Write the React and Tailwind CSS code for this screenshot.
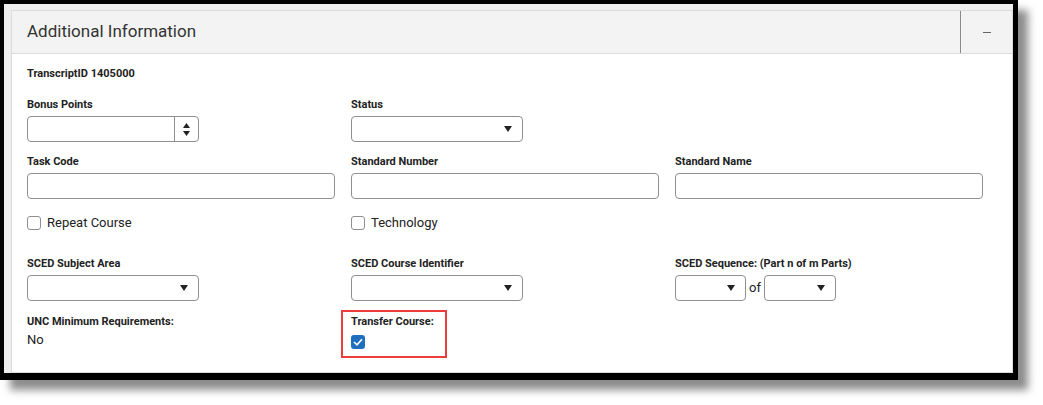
import React from 'react';

const font = { fontFamily: 'Roboto, "Liberation Sans", sans-serif' };

function Label({ children }) {
  return <div className="pt-[1px] text-[11px] font-bold leading-[14px] text-[#222] mb-[4px]">{children}</div>;
}

function TextBox({ className = '' }) {
  return <div className={`h-[26px] border border-[#8f8f8f] rounded-[4px] bg-white ${className}`} />;
}

function Caret() {
  return (
    <svg width="8" height="6" viewBox="0 0 8 6" className="block">
      <path d="M0 0 L8 0 L4 6 Z" fill="#222" />
    </svg>
  );
}

function Select({ className = '' }) {
  return (
    <div className={`h-[26px] border border-[#8f8f8f] rounded-[4px] bg-white flex items-center justify-end pr-[10px] ${className}`}>
      <Caret />
    </div>
  );
}

function Check({ label }) {
  return (
    <div className="flex items-center h-[16px]">
      <div className="w-[14px] h-[14px] border border-[#8f8f8f] rounded-[3px] bg-white" />
      <span className="ml-[6px] text-[13px] text-[#222]">{label}</span>
    </div>
  );
}

export default function App() {
  return (
    <div className="w-[1043px] h-[405px] bg-white" style={font}>
      <div className="w-[1018px] h-[380px] bg-black pt-[4px] pl-[4px] shadow-[10px_10px_8px_rgba(0,0,0,0.45)]">
        <div className="w-[1009px] h-[369px] bg-[#eeeeee] pt-[6px] pl-[7px]">
          <div className="w-[1002px] h-[363px] border border-[#dcdcdc] bg-white">
            {/* header */}
            <div className="h-[43px] bg-[#f3f3f3] border-b border-[#dcdcdc] flex items-center justify-between">
              <div className="pl-[15px] text-[17px] text-[#333] font-normal">Additional Information</div>
              <div className="h-full w-[52px] border-l border-[#8a8a8a] flex items-center justify-center">
                <div className="w-[8px] h-[1px] bg-[#666]" />
              </div>
            </div>

            {/* body */}
            <div className="pl-[15px] pt-[12px]">
              <div className="pt-[1px] text-[11px] font-bold leading-[14px] text-[#222]">TranscriptID 1405000</div>

              <div className="grid grid-cols-[308px_308px_308px] gap-x-[16px] mt-[16px]">
                <div>
                  <Label>Bonus Points</Label>
                  <div className="w-[172px] h-[26px] border border-[#8f8f8f] rounded-[4px] bg-white flex justify-end">
                    <div className="w-[24px] h-full border-l border-[#8f8f8f] flex flex-col items-center justify-center gap-[3px]">
                      <svg width="7" height="5" viewBox="0 0 7 5"><path d="M0 5 L7 5 L3.5 0 Z" fill="#222" /></svg>
                      <svg width="7" height="5" viewBox="0 0 7 5"><path d="M0 0 L7 0 L3.5 5 Z" fill="#222" /></svg>
                    </div>
                  </div>
                </div>
                <div>
                  <Label>Status</Label>
                  <Select className="w-[172px]" />
                </div>
                <div />
              </div>

              <div className="grid grid-cols-[308px_308px_308px] gap-x-[16px] mt-[12px]">
                <div>
                  <Label>Task Code</Label>
                  <TextBox />
                </div>
                <div>
                  <Label>Standard Number</Label>
                  <TextBox />
                </div>
                <div>
                  <Label>Standard Name</Label>
                  <TextBox />
                </div>
              </div>

              <div className="grid grid-cols-[308px_308px_308px] gap-x-[16px] mt-[16px]">
                <Check label="Repeat Course" />
                <Check label="Technology" />
                <div />
              </div>

              <div className="grid grid-cols-[308px_308px_308px] gap-x-[16px] mt-[25px]">
                <div>
                  <Label>SCED Subject Area</Label>
                  <Select className="w-[172px]" />
                </div>
                <div>
                  <Label>SCED Course Identifier</Label>
                  <Select className="w-[172px]" />
                </div>
                <div>
                  <Label>SCED Sequence: (Part n of m Parts)</Label>
                  <div className="flex items-center">
                    <Select className="w-[71px]" />
                    <span className="mx-[3px] text-[13px] text-[#222]">of</span>
                    <Select className="w-[72px]" />
                  </div>
                </div>
              </div>

              <div className="grid grid-cols-[308px_308px_308px] gap-x-[16px] mt-[13px]">
                <div>
                  <div className="pt-[1px] text-[11px] font-bold leading-[14px] text-[#222]">UNC Minimum Requirements:</div>
                  <div className="mt-[2px] text-[13px] leading-[18px] text-[#222]">No</div>
                </div>
                <div className="relative">
                  <div className="absolute left-[-10px] top-[-4px] w-[106px] h-[48px] border-2 border-[#ee3b3b]" />
                  <div className="pt-[1px] text-[11px] font-bold leading-[14px] text-[#222]">Transfer Course:</div>
                  <div className="mt-[6px] w-[14px] h-[14px] rounded-[3px] bg-[#1f6fc0] flex items-center justify-center">
                    <svg width="10" height="8" viewBox="0 0 10 8">
                      <path d="M1 4 L4 6.8 L9 1.2" fill="none" stroke="#fff" strokeWidth="1.6" />
                    </svg>
                  </div>
                </div>
                <div />
              </div>
            </div>
          </div>
        </div>
      </div>
    </div>
  );
}
